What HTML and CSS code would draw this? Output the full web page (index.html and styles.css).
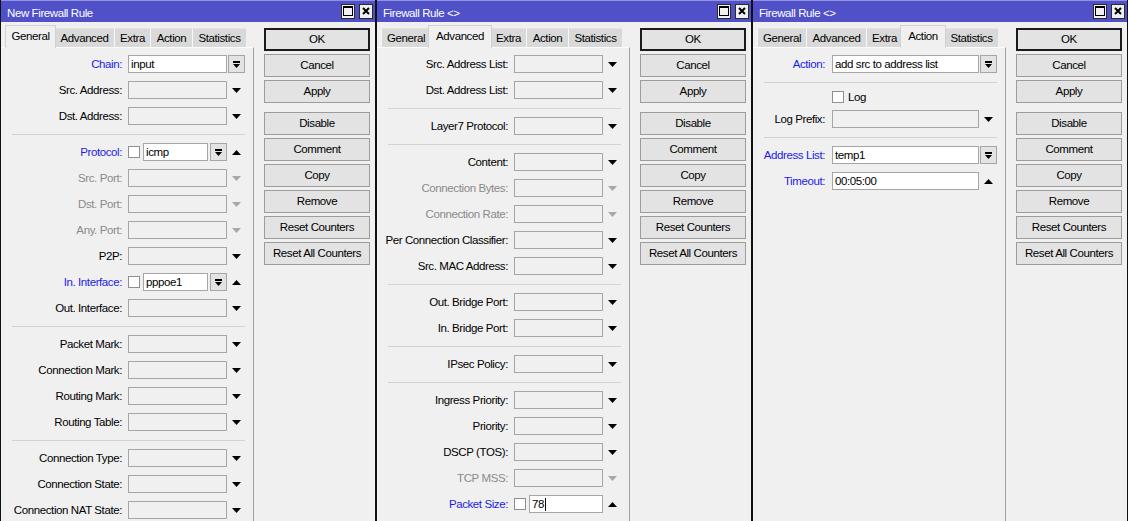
FILE: index.html
```html
<!DOCTYPE html>
<html>
<head>
<meta charset="utf-8">
<title>Firewall Rules</title>
<link rel="stylesheet" href="styles.css">
</head>
<body>
<div class="desk">

<!-- Window 1 -->
<section class="win w1">
  <header class="title">
    <span class="title-text">New Firewall Rule</span>
    <div class="tbtns">
      <span class="tb"><svg width="10" height="10" viewBox="0 0 10 10"><rect x="0.5" y="0.5" width="9" height="9" fill="none" stroke="#000"/><rect x="0" y="0" width="10" height="2"/></svg></span>
      <span class="tb"><svg width="8" height="8" viewBox="0 0 8 8"><path d="M1 1L7 7M7 1L1 7" stroke="#000" stroke-width="2"/></svg></span>
    </div>
  </header>
  <div class="body">
    <div class="left">
      <div class="tabs">
        <div class="tab t-gen on">General</div>
        <div class="tab t-adv">Advanced</div>
        <div class="tab t-ext">Extra</div>
        <div class="tab t-act">Action</div>
        <div class="tab t-sta">Statistics</div>
      </div>
      <div class="panel">
        <div class="row"><span class="lbl blue">Chain:</span><div class="fld"><span class="inp w">input</span></div><span class="arr c"><span class="cmb"><svg width="7" height="7" viewBox="0 0 7 7"><path d="M0 0H7V2H0ZM0 3H7L3.5 7Z"/></svg></span></span></div>
        <div class="row"><span class="lbl">Src. Address:</span><div class="fld"><span class="inp"></span></div><span class="arr"><svg width="9" height="5" viewBox="0 0 9 5"><path d="M0 0H9L4.5 5Z"/></svg></span></div>
        <div class="row"><span class="lbl">Dst. Address:</span><div class="fld"><span class="inp"></span></div><span class="arr"><svg width="9" height="5" viewBox="0 0 9 5"><path d="M0 0H9L4.5 5Z"/></svg></span></div>
        <div class="sep"></div>
        <div class="row"><span class="lbl blue">Protocol:</span><div class="fld"><span class="cb"></span><span class="inp w">icmp</span><span class="cmb"><svg width="7" height="7" viewBox="0 0 7 7"><path d="M0 0H7V2H0ZM0 3H7L3.5 7Z"/></svg></span></div><span class="arr"><svg width="9" height="5" viewBox="0 0 9 5"><path d="M0 5H9L4.5 0Z"/></svg></span></div>
        <div class="row dis"><span class="lbl">Src. Port:</span><div class="fld"><span class="inp"></span></div><span class="arr"><svg width="9" height="5" viewBox="0 0 9 5"><path d="M0 0H9L4.5 5Z"/></svg></span></div>
        <div class="row dis"><span class="lbl">Dst. Port:</span><div class="fld"><span class="inp"></span></div><span class="arr"><svg width="9" height="5" viewBox="0 0 9 5"><path d="M0 0H9L4.5 5Z"/></svg></span></div>
        <div class="row dis"><span class="lbl">Any. Port:</span><div class="fld"><span class="inp"></span></div><span class="arr"><svg width="9" height="5" viewBox="0 0 9 5"><path d="M0 0H9L4.5 5Z"/></svg></span></div>
        <div class="row"><span class="lbl">P2P:</span><div class="fld"><span class="inp"></span></div><span class="arr"><svg width="9" height="5" viewBox="0 0 9 5"><path d="M0 0H9L4.5 5Z"/></svg></span></div>
        <div class="row"><span class="lbl blue">In. Interface:</span><div class="fld"><span class="cb"></span><span class="inp w">pppoe1</span><span class="cmb"><svg width="7" height="7" viewBox="0 0 7 7"><path d="M0 0H7V2H0ZM0 3H7L3.5 7Z"/></svg></span></div><span class="arr"><svg width="9" height="5" viewBox="0 0 9 5"><path d="M0 5H9L4.5 0Z"/></svg></span></div>
        <div class="row"><span class="lbl">Out. Interface:</span><div class="fld"><span class="inp"></span></div><span class="arr"><svg width="9" height="5" viewBox="0 0 9 5"><path d="M0 0H9L4.5 5Z"/></svg></span></div>
        <div class="sep"></div>
        <div class="row"><span class="lbl">Packet Mark:</span><div class="fld"><span class="inp"></span></div><span class="arr"><svg width="9" height="5" viewBox="0 0 9 5"><path d="M0 0H9L4.5 5Z"/></svg></span></div>
        <div class="row"><span class="lbl">Connection Mark:</span><div class="fld"><span class="inp"></span></div><span class="arr"><svg width="9" height="5" viewBox="0 0 9 5"><path d="M0 0H9L4.5 5Z"/></svg></span></div>
        <div class="row"><span class="lbl">Routing Mark:</span><div class="fld"><span class="inp"></span></div><span class="arr"><svg width="9" height="5" viewBox="0 0 9 5"><path d="M0 0H9L4.5 5Z"/></svg></span></div>
        <div class="row"><span class="lbl">Routing Table:</span><div class="fld"><span class="inp"></span></div><span class="arr"><svg width="9" height="5" viewBox="0 0 9 5"><path d="M0 0H9L4.5 5Z"/></svg></span></div>
        <div class="sep"></div>
        <div class="row"><span class="lbl">Connection Type:</span><div class="fld"><span class="inp"></span></div><span class="arr"><svg width="9" height="5" viewBox="0 0 9 5"><path d="M0 0H9L4.5 5Z"/></svg></span></div>
        <div class="row"><span class="lbl">Connection State:</span><div class="fld"><span class="inp"></span></div><span class="arr"><svg width="9" height="5" viewBox="0 0 9 5"><path d="M0 0H9L4.5 5Z"/></svg></span></div>
        <div class="row"><span class="lbl">Connection NAT State:</span><div class="fld"><span class="inp"></span></div><span class="arr"><svg width="9" height="5" viewBox="0 0 9 5"><path d="M0 0H9L4.5 5Z"/></svg></span></div>
      </div>
    </div>
    <div class="btns">
      <div class="btn ok">OK</div>
      <div class="btn">Cancel</div>
      <div class="btn gap">Apply</div>
      <div class="btn">Disable</div>
      <div class="btn">Comment</div>
      <div class="btn">Copy</div>
      <div class="btn">Remove</div>
      <div class="btn">Reset Counters</div>
      <div class="btn">Reset All Counters</div>
    </div>
  </div>
</section>

<!-- Window 2 -->
<section class="win w2">
  <header class="title">
    <span class="title-text">Firewall Rule &lt;&gt;</span>
    <div class="tbtns">
      <span class="tb"><svg width="10" height="10" viewBox="0 0 10 10"><rect x="0.5" y="0.5" width="9" height="9" fill="none" stroke="#000"/><rect x="0" y="0" width="10" height="2"/></svg></span>
      <span class="tb"><svg width="8" height="8" viewBox="0 0 8 8"><path d="M1 1L7 7M7 1L1 7" stroke="#000" stroke-width="2"/></svg></span>
    </div>
  </header>
  <div class="body">
    <div class="left">
      <div class="tabs">
        <div class="tab t-gen">General</div>
        <div class="tab t-adv on">Advanced</div>
        <div class="tab t-ext">Extra</div>
        <div class="tab t-act">Action</div>
        <div class="tab t-sta">Statistics</div>
      </div>
      <div class="panel">
        <div class="row"><span class="lbl">Src. Address List:</span><div class="fld"><span class="inp"></span></div><span class="arr"><svg width="9" height="5" viewBox="0 0 9 5"><path d="M0 0H9L4.5 5Z"/></svg></span></div>
        <div class="row"><span class="lbl">Dst. Address List:</span><div class="fld"><span class="inp"></span></div><span class="arr"><svg width="9" height="5" viewBox="0 0 9 5"><path d="M0 0H9L4.5 5Z"/></svg></span></div>
        <div class="sep"></div>
        <div class="row"><span class="lbl">Layer7 Protocol:</span><div class="fld"><span class="inp"></span></div><span class="arr"><svg width="9" height="5" viewBox="0 0 9 5"><path d="M0 0H9L4.5 5Z"/></svg></span></div>
        <div class="sep"></div>
        <div class="row"><span class="lbl">Content:</span><div class="fld"><span class="inp"></span></div><span class="arr"><svg width="9" height="5" viewBox="0 0 9 5"><path d="M0 0H9L4.5 5Z"/></svg></span></div>
        <div class="row dis"><span class="lbl">Connection Bytes:</span><div class="fld"><span class="inp"></span></div><span class="arr"><svg width="9" height="5" viewBox="0 0 9 5"><path d="M0 0H9L4.5 5Z"/></svg></span></div>
        <div class="row dis"><span class="lbl">Connection Rate:</span><div class="fld"><span class="inp"></span></div><span class="arr"><svg width="9" height="5" viewBox="0 0 9 5"><path d="M0 0H9L4.5 5Z"/></svg></span></div>
        <div class="row"><span class="lbl">Per Connection Classifier:</span><div class="fld"><span class="inp"></span></div><span class="arr"><svg width="9" height="5" viewBox="0 0 9 5"><path d="M0 0H9L4.5 5Z"/></svg></span></div>
        <div class="row"><span class="lbl">Src. MAC Address:</span><div class="fld"><span class="inp"></span></div><span class="arr"><svg width="9" height="5" viewBox="0 0 9 5"><path d="M0 0H9L4.5 5Z"/></svg></span></div>
        <div class="sep"></div>
        <div class="row"><span class="lbl">Out. Bridge Port:</span><div class="fld"><span class="inp"></span></div><span class="arr"><svg width="9" height="5" viewBox="0 0 9 5"><path d="M0 0H9L4.5 5Z"/></svg></span></div>
        <div class="row"><span class="lbl">In. Bridge Port:</span><div class="fld"><span class="inp"></span></div><span class="arr"><svg width="9" height="5" viewBox="0 0 9 5"><path d="M0 0H9L4.5 5Z"/></svg></span></div>
        <div class="sep"></div>
        <div class="row"><span class="lbl">IPsec Policy:</span><div class="fld"><span class="inp"></span></div><span class="arr"><svg width="9" height="5" viewBox="0 0 9 5"><path d="M0 0H9L4.5 5Z"/></svg></span></div>
        <div class="sep"></div>
        <div class="row"><span class="lbl">Ingress Priority:</span><div class="fld"><span class="inp"></span></div><span class="arr"><svg width="9" height="5" viewBox="0 0 9 5"><path d="M0 0H9L4.5 5Z"/></svg></span></div>
        <div class="row"><span class="lbl">Priority:</span><div class="fld"><span class="inp"></span></div><span class="arr"><svg width="9" height="5" viewBox="0 0 9 5"><path d="M0 0H9L4.5 5Z"/></svg></span></div>
        <div class="row"><span class="lbl">DSCP (TOS):</span><div class="fld"><span class="inp"></span></div><span class="arr"><svg width="9" height="5" viewBox="0 0 9 5"><path d="M0 0H9L4.5 5Z"/></svg></span></div>
        <div class="row dis"><span class="lbl">TCP MSS:</span><div class="fld"><span class="inp"></span></div><span class="arr"><svg width="9" height="5" viewBox="0 0 9 5"><path d="M0 0H9L4.5 5Z"/></svg></span></div>
        <div class="row"><span class="lbl blue">Packet Size:</span><div class="fld"><span class="cb"></span><span class="inp w">78<span class="caret"></span></span></div><span class="arr"><svg width="9" height="5" viewBox="0 0 9 5"><path d="M0 5H9L4.5 0Z"/></svg></span></div>
      </div>
    </div>
    <div class="btns">
      <div class="btn ok">OK</div>
      <div class="btn">Cancel</div>
      <div class="btn gap">Apply</div>
      <div class="btn">Disable</div>
      <div class="btn">Comment</div>
      <div class="btn">Copy</div>
      <div class="btn">Remove</div>
      <div class="btn">Reset Counters</div>
      <div class="btn">Reset All Counters</div>
    </div>
  </div>
</section>

<!-- Window 3 -->
<section class="win w3">
  <header class="title">
    <span class="title-text">Firewall Rule &lt;&gt;</span>
    <div class="tbtns">
      <span class="tb"><svg width="10" height="10" viewBox="0 0 10 10"><rect x="0.5" y="0.5" width="9" height="9" fill="none" stroke="#000"/><rect x="0" y="0" width="10" height="2"/></svg></span>
      <span class="tb"><svg width="8" height="8" viewBox="0 0 8 8"><path d="M1 1L7 7M7 1L1 7" stroke="#000" stroke-width="2"/></svg></span>
    </div>
  </header>
  <div class="body">
    <div class="left">
      <div class="tabs">
        <div class="tab t-gen">General</div>
        <div class="tab t-adv">Advanced</div>
        <div class="tab t-ext">Extra</div>
        <div class="tab t-act on">Action</div>
        <div class="tab t-sta">Statistics</div>
      </div>
      <div class="panel">
        <div class="row"><span class="lbl blue">Action:</span><div class="fld"><span class="inp w">add src to address list</span></div><span class="arr c"><span class="cmb"><svg width="7" height="7" viewBox="0 0 7 7"><path d="M0 0H7V2H0ZM0 3H7L3.5 7Z"/></svg></span></span></div>
        <div class="sep"></div>
        <div class="row chk"><span class="lbl"></span><div class="fld"><span class="cb"></span><span class="cbl">Log</span></div></div>
        <div class="row"><span class="lbl">Log Prefix:</span><div class="fld"><span class="inp"></span></div><span class="arr"><svg width="9" height="5" viewBox="0 0 9 5"><path d="M0 0H9L4.5 5Z"/></svg></span></div>
        <div class="sep"></div>
        <div class="row"><span class="lbl blue">Address List:</span><div class="fld"><span class="inp w">temp1</span></div><span class="arr c"><span class="cmb"><svg width="7" height="7" viewBox="0 0 7 7"><path d="M0 0H7V2H0ZM0 3H7L3.5 7Z"/></svg></span></span></div>
        <div class="row"><span class="lbl blue">Timeout:</span><div class="fld"><span class="inp w">00:05:00</span></div><span class="arr"><svg width="9" height="5" viewBox="0 0 9 5"><path d="M0 5H9L4.5 0Z"/></svg></span></div>
      </div>
    </div>
    <div class="btns">
      <div class="btn ok">OK</div>
      <div class="btn">Cancel</div>
      <div class="btn gap">Apply</div>
      <div class="btn">Disable</div>
      <div class="btn">Comment</div>
      <div class="btn">Copy</div>
      <div class="btn">Remove</div>
      <div class="btn">Reset Counters</div>
      <div class="btn">Reset All Counters</div>
    </div>
  </div>
</section>

</div>
</body>
</html>
```
FILE: styles.css
```css
* { box-sizing: border-box; }
html, body { margin: 0; padding: 0; }
body {
  font-family: "Liberation Sans", Arial, sans-serif;
  font-size: 11.5px;
  letter-spacing: -0.4px;
  color: #000;
  background: #f0f0f0;
  width: 1128px;
  height: 521px;
  overflow: hidden;
}
.desk { display: flex; height: 521px; overflow: hidden; }

.win {
  width: 376px; flex: none; height: 521px;
  border-left: 1px solid #111; border-right: 1px solid #111;
  background: #f0f0f0;
  display: flex; flex-direction: column;
}
.w1 { --lw: 121px; --g: 6px; --fw: 99px; }
.w2 { --lw: 131px; --g: 6px; --fw: 89px; }
.w3 { --lw: 72px; --g: 7px; --fw: 147px; }

.title {
  height: 22px; flex: none;
  background: #5050c9;
  box-shadow: inset 0 1px 0 #9494de;
  display: flex; align-items: center;
  padding: 0 2px 0 6px;
  color: #fff; font-size: 11.5px;
}
.title-text { padding-top: 3px; }
.tbtns { margin-left: auto; display: flex; gap: 4px; }
.tb {
  width: 14px; height: 15px;
  background: #f0f0f0; border: 1px solid #2a2a2a;
  display: flex; align-items: center; justify-content: center;
}

.body { flex: 1; display: flex; min-height: 0; }
.left { width: 253px; flex: none; display: flex; flex-direction: column; }

.tabs { height: 25px; flex: none; display: flex; align-items: flex-end; padding-left: 4px; }
.tab {
  width: var(--w); height: 19px; line-height: 18px;
  text-align: center; white-space: nowrap;
  background: #d9d9d9;
  border-left: 1px solid #f8f8f8; border-top: 1px solid #e4e4e4;
}
.t-gen { --w: 49px; }
.t-adv { --w: 60px; }
.t-ext { --w: 36px; }
.t-act { --w: 42px; }
.t-sta { --w: 54px; }
.tab.on {
  width: calc(var(--w) + 4px);
  height: 23px; line-height: 20px;
  margin: 0 -2px -1px;
  position: relative; z-index: 1;
  background: #f0f0f0;
  border: 1px solid #d2d2d2; border-bottom: none;
}
.tab.on:first-child { width: calc(var(--w) + 2px); margin-left: 0; }

.panel {
  flex: 1;
  border-top: 1px solid #fcfcfc;
  border-right: 1px solid #a0a0a0;
  padding-top: 3px;
}

.row { display: flex; align-items: center; height: 26px; }
.row.chk { height: 19px; }
.lbl { width: var(--lw); flex: none; text-align: right; white-space: nowrap; }
.blue { color: #1c1ce8; }
.dis .lbl { color: #8a8a8a; }
.dis .arr { fill: #a8a8a8; }
.fld { width: var(--fw); margin-left: var(--g); height: 18px; display: flex; flex: none; align-items: center; }
.arr { width: 19px; height: 18px; flex: none; display: flex; align-items: center; justify-content: center; }
.arr.c { justify-content: flex-start; padding-left: 1px; }
.inp {
  flex: 1; height: 18px; min-width: 0;
  border: 1px solid #a6a6a6;
  padding: 0 2px; line-height: 16px;
  white-space: nowrap; overflow: hidden;
}
.inp.w { background: #fff; }
.cb { width: 12px; height: 12px; flex: none; border: 1px solid #8f8f8f; background: #fff; margin-right: 3px; }
.cbl { margin-left: 1px; }
.cmb {
  width: 17px; height: 18px; flex: none;
  border: 1px solid #a6a6a6; background: #e3e3e3;
  display: flex; align-items: center; justify-content: center;
}
.fld .cmb { margin-left: 2px; }
.caret { display: inline-block; width: 1px; height: 13px; background: #000; vertical-align: -3px; margin-left: 1px; }

.sep { height: 10px; padding: 5px 0 0 11px; }
.sep::after { content: ""; display: block; width: 233px; height: 1px; background: #d3d3d3; }

.btns { width: 106px; margin-left: 10px; padding-top: 6px; display: flex; flex-direction: column; gap: 3px; flex: none; }
.btn {
  height: 23px; line-height: 21px; text-align: center; white-space: nowrap;
  border: 1px solid #9c9c9c; background: #e3e3e3;
}
.btn.ok { border: 2px solid #1a1a1a; line-height: 19px; }
.btn.gap { margin-bottom: 6px; }
```
